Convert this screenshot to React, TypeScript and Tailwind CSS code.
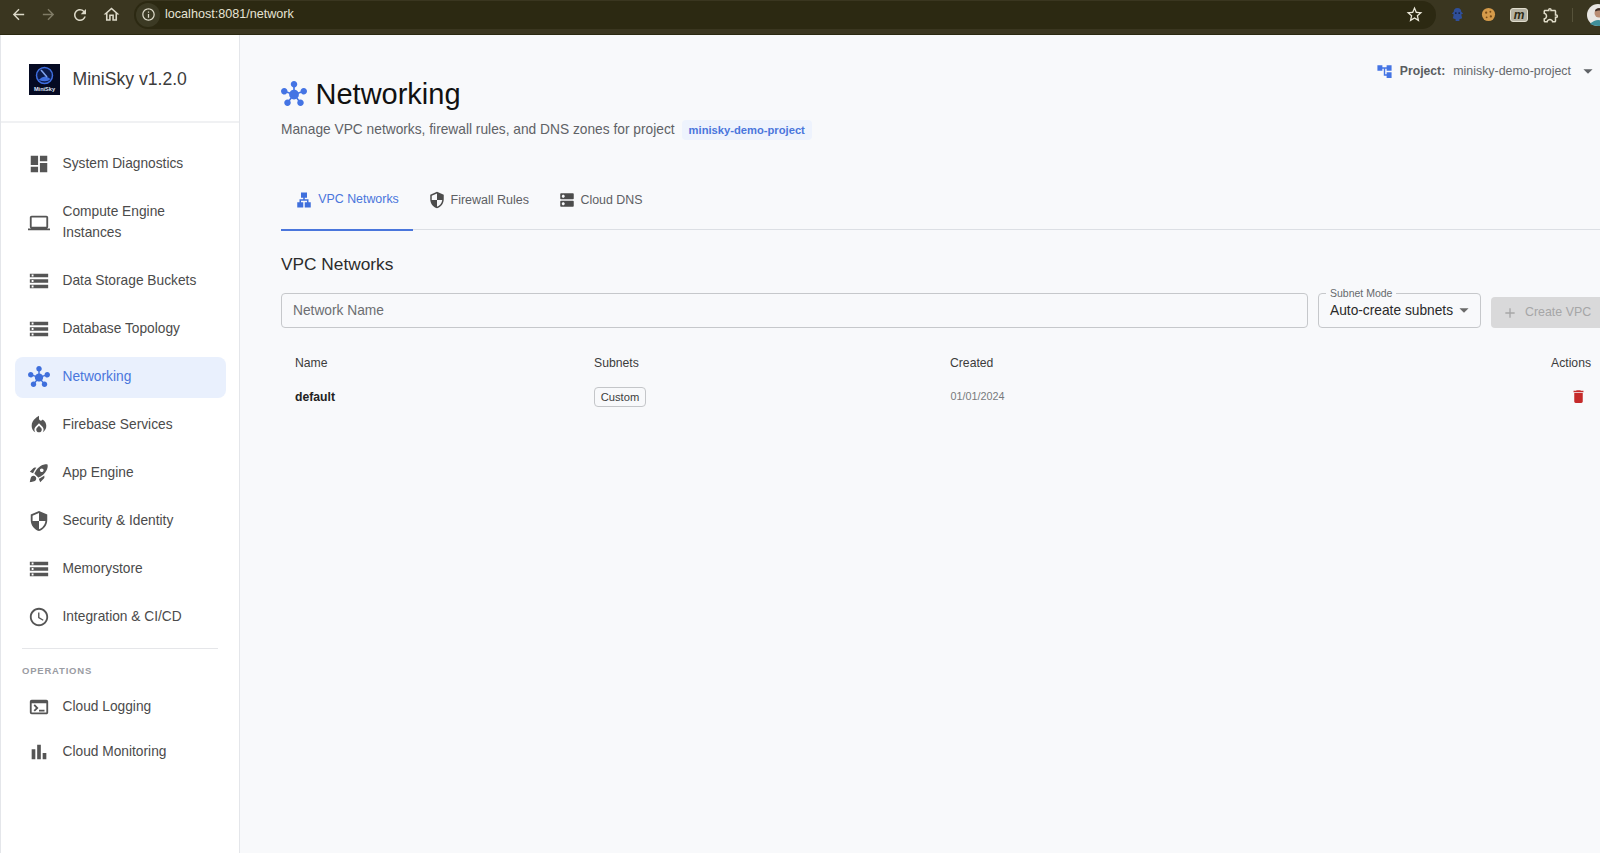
import React from "react";
import {
  MdArrowBack, MdArrowForward, MdRefresh, MdOutlineHome, MdInfoOutline, MdStarBorder, MdOutlineExtension,
  MdDashboard, MdLaptop, MdStorage, MdHub, MdLocalFireDepartment, MdRocketLaunch, MdSecurity, MdAccessTime,
  MdOutlineTerminal, MdBarChart, MdLan, MdDns, MdAccountTree, MdDelete, MdAdd, MdArrowDropDown,
} from "react-icons/md";

const font = "font-['Liberation_Sans',Arial,sans-serif]";

function NavItem({ icon: Icon, label, active, tall }: { icon: any; label: string; active?: boolean; tall?: boolean }) {
  return (
    <div
      className={`ml-[14px] mr-[13px] flex items-center rounded-[8px] pl-[13px] pr-[8px] ${tall ? "h-[62px]" : "h-[41px]"} ${
        active ? "bg-[#e9f0fd] text-[#4a76dc]" : "text-[#4b4b4b]"
      }`}
    >
      <Icon className={`h-[22px] w-[22px] shrink-0 ${active ? "text-[#3f6fdc]" : "text-[#555555]"}`} />
      <span className="ml-[12.5px] text-[13.75px] leading-[20.4px]">{label}</span>
    </div>
  );
}

function Logo() {
  return (
    <svg viewBox="0 0 31 31" className="h-[31px] w-[31px] shrink-0">
      <rect width="31" height="31" fill="#050a22" />
      <circle cx="15.5" cy="11.5" r="8" fill="#0c1a4a" stroke="#3f6fe0" strokeWidth="1.5" />
      <path d="M9.5 16 Q15.5 9.5 21.5 15 Q18 19 9.5 16Z" fill="#3f6fe0" />
      <path d="M12 6 L18 13" stroke="#7fa2ee" strokeWidth="1.6" />
      <text x="15.5" y="26.5" textAnchor="middle" fontSize="5.6" fontWeight="700" fill="#dfe6f7" fontFamily="Liberation Sans">MiniSky</text>
    </svg>
  );
}

export default function App() {
  return (
    <div className={`flex h-[853px] w-[1600px] flex-col overflow-hidden bg-[#f8f9fb] ${font}`}>
      {/* Browser toolbar */}
      <div className="flex h-[35px] shrink-0 items-center border-b border-[#2a2810] bg-[#3a3620] pb-[5px] text-[#dcd9c8]">
        <div className="flex w-[134px] shrink-0 items-center pl-[10px]">
          <MdArrowBack className="h-[17px] w-[17px]" />
          <MdArrowForward className="ml-[13px] h-[17px] w-[17px] text-[#807c66]" />
          <MdRefresh className="ml-[14px] h-[18px] w-[18px]" />
          <MdOutlineHome className="ml-[13px] h-[19px] w-[19px]" />
        </div>
        <div className="flex h-[28px] w-[1302px] shrink-0 items-center rounded-full bg-[#2c2912] pl-[2px]">
          <div className="flex h-[24px] w-[24px] items-center justify-center rounded-full bg-[#3c3a24]">
            <MdInfoOutline className="h-[15px] w-[15px]" />
          </div>
          <span className="ml-[5px] text-[12.6px] text-[#e6e3d4]">localhost:8081/network</span>
          <MdStarBorder className="ml-auto mr-[12px] h-[19px] w-[19px] text-[#ece9da]" />
        </div>
        <div className="flex flex-1 items-center pl-[14px]">
          <svg viewBox="0 0 16 16" className="h-[15px] w-[15px]">
            <path d="M8 1C5 1 4 3 4 5L2 7l2 1-1 4 3 1v2h4v-2l3-1-1-4 2-1-2-2c0-2-1-4-4-4Z" fill="#2f4f9a" />
            <circle cx="6.2" cy="6.5" r="1" fill="#16213f" />
            <circle cx="9.8" cy="6.5" r="1" fill="#16213f" />
          </svg>
          <svg viewBox="0 0 16 16" className="ml-[16px] h-[15px] w-[15px]">
            <circle cx="8" cy="8" r="7" fill="#d59b4a" />
            <circle cx="5.5" cy="6" r="1.2" fill="#7a4c17" />
            <circle cx="10" cy="5" r="1" fill="#7a4c17" />
            <circle cx="10.5" cy="10" r="1.2" fill="#7a4c17" />
            <circle cx="6" cy="11" r="1" fill="#7a4c17" />
          </svg>
          <div className="ml-[14px] flex h-[14px] w-[18px] items-center justify-center rounded-[3px] border border-[#e0ddcd] bg-[#b5b2a3] text-[12px] font-bold italic leading-none text-[#2f2c16]">
            m
          </div>
          <MdOutlineExtension className="ml-[14px] h-[18px] w-[18px] text-[#e0dcc8]" />
          <div className="ml-[12px] h-[14px] w-px bg-[#56523a]" />
          <svg viewBox="0 0 22 22" className="ml-[14px] h-[22px] w-[22px] shrink-0">
            <circle cx="11" cy="11" r="11" fill="#e8e6e2" />
            <circle cx="12" cy="9" r="4.5" fill="#b98d73" />
            <path d="M8 6 Q12 2 16 6 L15.5 7.5 Q12 5.5 8.5 7.5Z" fill="#3c2c24" />
            <path d="M3 20 Q11 12 20 20 Q11 24 3 20Z" fill="#3f8f9b" />
          </svg>
        </div>
      </div>

      <div className="flex min-h-0 flex-1">
        {/* Sidebar */}
        <aside className="flex w-[240px] shrink-0 flex-col border-x border-x-[#e4e6ea] bg-white">
          <div className="flex h-[88px] shrink-0 items-center border-b-2 border-[#f0f1f3] pl-[27.5px] pt-[2px]">
            <Logo />
            <span className="ml-[13px] text-[17.6px] text-[#3c3c3c]">MiniSky v1.2.0</span>
          </div>
          <nav className="flex flex-col gap-[7px] pt-[20.5px]">
            <NavItem icon={MdDashboard} label="System Diagnostics" />
            <NavItem icon={MdLaptop} label="Compute Engine Instances" tall />
            <NavItem icon={MdStorage} label="Data Storage Buckets" />
            <NavItem icon={MdStorage} label="Database Topology" />
            <NavItem icon={MdHub} label="Networking" active />
            <NavItem icon={MdLocalFireDepartment} label="Firebase Services" />
            <NavItem icon={MdRocketLaunch} label="App Engine" />
            <NavItem icon={MdSecurity} label="Security & Identity" />
            <NavItem icon={MdStorage} label="Memorystore" />
            <NavItem icon={MdAccessTime} label="Integration & CI/CD" />
          </nav>
          <div className="mx-[21px] mt-[10px] h-px bg-[#e5e6e9]" />
          <div className="ml-[21px] mt-[16px] text-[9.5px] font-bold leading-[11px] tracking-[0.8px] text-[#9a9ca3]">OPERATIONS</div>
          <div className="mt-[11px] flex flex-col gap-[4px]">
            <NavItem icon={MdOutlineTerminal} label="Cloud Logging" />
            <NavItem icon={MdBarChart} label="Cloud Monitoring" />
          </div>
        </aside>

        {/* Main */}
        <main className="min-w-0 flex-1 overflow-hidden">
          <div className="flex items-start justify-between">
            <div className="pl-[41px] pt-[42px]">
              <div className="flex h-[34px] items-center">
                <MdHub className="h-[26px] w-[26px] text-[#4474e4]" />
                <h1 className="ml-[8.5px] text-[29px] font-normal leading-[34px] text-[#111111]">Networking</h1>
              </div>
              <div className="mt-[8px] flex h-[22px] items-center">
                <span className="text-[13.75px] text-[#5f6266]">Manage VPC networks, firewall rules, and DNS zones for project</span>
                <span className="ml-[7px] flex h-[20px] items-center rounded-[4px] bg-[#eef3fd] px-[7px] text-[11.2px] font-bold text-[#4a76dc]">
                  minisky-demo-project
                </span>
              </div>
            </div>
            <div className="flex items-center pr-[1px] pt-[25px]">
              <MdAccountTree className="h-[17px] w-[17px] text-[#4474e4]" />
              <span className="ml-[7px] text-[12.2px] font-bold text-[#5a5d60]">Project:</span>
              <span className="ml-[8px] text-[12.4px] text-[#66696d]">minisky-demo-project</span>
              <MdArrowDropDown className="ml-[6px] h-[22px] w-[22px] text-[#5f6266]" />
            </div>
          </div>

          <div className="ml-[41px] w-[1326px]">
            <div className="mt-[31px] flex h-[58px] border-b border-[#dcdfe4]">
              <div className="flex h-[59px] w-[132px] items-center justify-center border-b-2 border-[#4a76dc] pb-[2px] text-[#4a76dc]">
                <MdLan className="h-[18px] w-[18px] text-[#3f6fdc]" />
                <span className="ml-[5px] text-[12.4px]">VPC Networks</span>
              </div>
              <div className="ml-[14.5px] flex h-[56px] items-center text-[#5d6064]">
                <MdSecurity className="h-[18px] w-[18px] text-[#4c4c4c]" />
                <span className="ml-[5px] text-[12.5px]">Firewall Rules</span>
              </div>
              <div className="ml-[28.5px] flex h-[56px] items-center text-[#5d6064]">
                <MdDns className="h-[18px] w-[18px] text-[#4c4c4c]" />
                <span className="ml-[5px] text-[12.4px]">Cloud DNS</span>
              </div>
            </div>

            <h2 className="mt-[23px] text-[17.3px] font-normal leading-[22px] text-[#2c2c2c]">VPC Networks</h2>

            <div className="mt-[18px] flex items-end">
              <div className="flex h-[35px] flex-1 items-center rounded-[4px] border border-[#c6c8cb] pl-[11px] pt-[1px] text-[13.75px] text-[#6c6e71]">
                Network Name
              </div>
              <div className="relative ml-[10px] flex h-[35px] w-[163px] items-center rounded-[4px] border border-[#c6c8cb] pl-[11px] pt-[1px] text-[13.75px] text-[#2a2a2a]">
                <span className="absolute left-[7px] top-[-7px] bg-[#f8f9fb] px-[4px] text-[10.5px] leading-[12px] text-[#66696c]">Subnet Mode</span>
                Auto-create subnets
                <MdArrowDropDown className="absolute right-[5px] top-[5px] h-[22px] w-[22px] text-[#6a6a6a]" />
              </div>
              <div className="ml-[10px] flex h-[31px] w-[116px] items-center rounded-[4px] bg-[#d9d9da] pl-[11px] text-[12.4px] text-[#a6a6a7]">
                <MdAdd className="h-[16px] w-[16px]" />
                <span className="ml-[7px]">Create VPC</span>
              </div>
            </div>

            <div className="mt-[15px] grid grid-cols-[313px_356px_1fr_auto] items-center pr-[16px]">
              <div className="flex h-[41px] items-center pl-[14px] text-[12.2px] text-[#3c3c3c]">Name</div>
              <div className="h-[41px] text-[12.2px] leading-[41px] text-[#3c3c3c]">Subnets</div>
              <div className="h-[41px] text-[12.2px] leading-[41px] text-[#3c3c3c]">Created</div>
              <div className="h-[41px] text-[12.2px] leading-[41px] text-[#3c3c3c]">Actions</div>

              <div className="flex h-[26px] items-center pl-[14px] text-[12.2px] font-bold text-[#222222]">default</div>
              <div className="h-[26px]">
                <span className="mt-[3px] flex h-[20px] w-[52px] items-center justify-center rounded-[4px] border border-[#c4c6c9] text-[11.2px] text-[#3d3d3d]">
                  Custom
                </span>
              </div>
              <div className="h-[26px] pl-[0.5px] text-[10.8px] leading-[25px] text-[#77797c]">01/01/2024</div>
              <div className="flex h-[26px] items-center justify-end">
                <MdDelete className="mb-[2px] mr-[4px] h-[17px] w-[17px] text-[#c52a2a]" />
              </div>
            </div>
          </div>
        </main>
      </div>
    </div>
  );
}
